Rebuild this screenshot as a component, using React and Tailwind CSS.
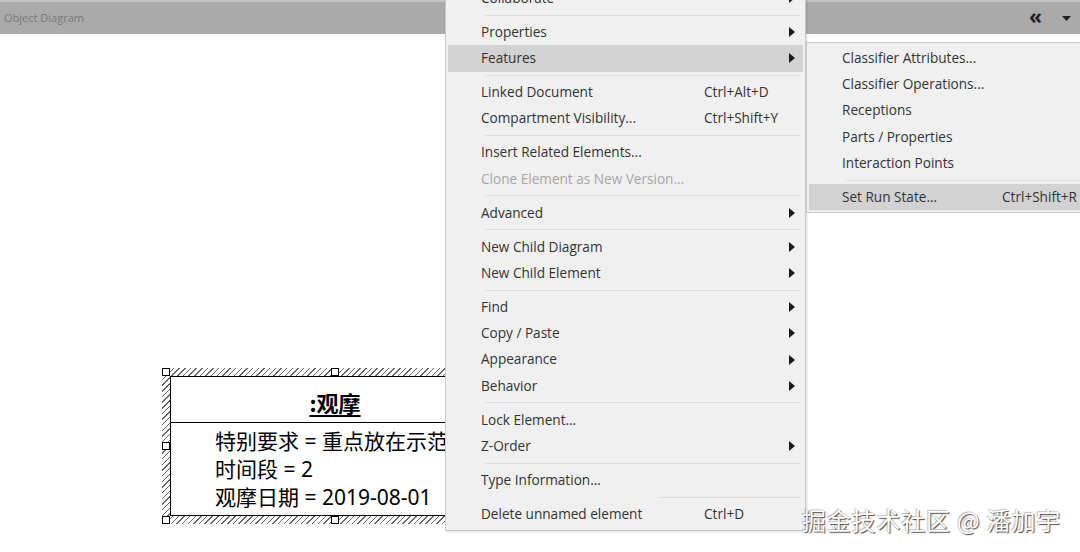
import React from 'react';

const MENU = [
  { label: 'Collaborate', arrow: true },
  'sep',
  { label: 'Properties', arrow: true },
  { label: 'Features', arrow: true, active: true },
  'sep',
  { label: 'Linked Document', shortcut: 'Ctrl+Alt+D' },
  { label: 'Compartment Visibility...', shortcut: 'Ctrl+Shift+Y' },
  'sep',
  { label: 'Insert Related Elements...' },
  { label: 'Clone Element as New Version...', disabled: true },
  'sep',
  { label: 'Advanced', arrow: true },
  'sep',
  { label: 'New Child Diagram', arrow: true },
  { label: 'New Child Element', arrow: true },
  'sep',
  { label: 'Find', arrow: true },
  { label: 'Copy / Paste', arrow: true },
  { label: 'Appearance', arrow: true },
  { label: 'Behavior', arrow: true },
  'sep',
  { label: 'Lock Element...' },
  { label: 'Z-Order', arrow: true },
  'sep',
  { label: 'Type Information...' },
  'sepShort',
  { label: 'Delete unnamed element', shortcut: 'Ctrl+D' },
];

const SUBMENU = [
  { label: 'Classifier Attributes...' },
  { label: 'Classifier Operations...' },
  { label: 'Receptions' },
  { label: 'Parts / Properties' },
  { label: 'Interaction Points' },
  'sep',
  { label: 'Set Run State...', shortcut: 'Ctrl+Shift+R', active: true },
];

function Arrow() {
  return (
    <svg width="6" height="10" viewBox="0 0 6 10" className="block">
      <path d="M0 0 L6 5 L0 10 Z" fill="#1a1a1a" />
    </svg>
  );
}

function MenuRow({ item, labelWidth }) {
  return (
    <div
      className={`mx-[2px] h-[26.25px] flex items-center pl-[33px] pr-[8px] ${
        item.active ? 'bg-[#d2d2d2]' : ''
      } ${item.disabled ? 'text-[#a6a6a6]' : 'text-[#333333]'}`}
    >
      <span className="shrink-0 whitespace-nowrap" style={{ width: labelWidth }}>
        {item.label}
      </span>
      <span className="flex-1 whitespace-nowrap">{item.shortcut}</span>
      {item.arrow && <Arrow />}
    </div>
  );
}

function Separator({ short }) {
  return (
    <div className="h-[7.75px] flex items-center">
      <div className={`h-px bg-[#dedede] flex-1 mr-[5px] ${short ? 'ml-[212px]' : 'ml-[39px]'}`} />
    </div>
  );
}

function Handle({ className }) {
  return <div className={`absolute w-[8px] h-[8px] bg-white border border-black ${className}`} />;
}

export default function App() {
  const menuFont = { fontFamily: '"Open Sans", "Noto Sans", sans-serif' };

  return (
    <div className="relative w-[1080px] h-[552px] overflow-hidden bg-white">
      {/* title bar */}
      <div className="h-[34px] border-t-2 border-[#c4c4c4] bg-[#aaaaaa] flex items-center px-[4px]">
        <span className="text-[11px] text-[#787878]" style={menuFont}>
          Object Diagram
        </span>
        <div className="ml-auto flex items-center gap-[20px] pr-[5px]">
          <span className="text-[21px] font-bold leading-none text-[#222] -mt-[4px]">«</span>
          <svg width="9" height="5" viewBox="0 0 9 5">
            <path d="M0 0 H9 L4.5 5 Z" fill="#222" />
          </svg>
        </div>
      </div>

      {/* diagram element */}
      <div className="absolute left-[162px] top-[368px] w-[346px] h-[156px] bg-[repeating-linear-gradient(135deg,#666_0px,#666_1px,#fff_1px,#fff_4px)] p-[8px]">
        <div
          className="w-full h-full bg-white border border-black flex flex-col"
          style={{ fontFamily: '"Noto Sans", "Noto Sans CJK SC", sans-serif' }}
        >
          <div className="h-[46px] border-b border-black flex items-center justify-center pt-[5px]">
            <span
              className="text-[22px] font-bold underline underline-offset-[3px] text-black"
              style={{ fontFamily: '"Noto Sans CJK SC", sans-serif' }}
            >
              :观摩
            </span>
          </div>
          <div className="pl-[44px] pt-[4px] text-[21px] leading-[28px] text-black whitespace-nowrap">
            <div>特别要求 = 重点放在示范</div>
            <div>时间段 = 2</div>
            <div>观摩日期 = 2019-08-01</div>
          </div>
        </div>
        <Handle className="left-0 top-0" />
        <Handle className="left-[169px] top-0" />
        <Handle className="left-0 top-[74px]" />
        <Handle className="left-0 bottom-0" />
        <Handle className="left-[169px] bottom-0" />
      </div>

      {/* context menu */}
      <div
        className="absolute left-[445px] top-[-19px] w-[361px] bg-[#f0f0f0] border border-[#c9c9c9] py-[3px] text-[13.6px] shadow-[1px_1px_2px_rgba(0,0,0,0.15)]"
        style={menuFont}
      >
        {MENU.map((item, i) =>
          typeof item === 'string' ? (
            <Separator key={i} short={item === 'sepShort'} />
          ) : (
            <MenuRow key={i} item={item} labelWidth={223} />
          )
        )}
      </div>

      {/* submenu */}
      <div
        className="absolute left-[806px] top-[42px] w-[290px] bg-[#f0f0f0] border border-[#c9c9c9] py-[2px] text-[13.6px]"
        style={menuFont}
      >
        {SUBMENU.map((item, i) =>
          typeof item === 'string' ? (
            <Separator key={i} />
          ) : (
            <MenuRow key={i} item={item} labelWidth={160} />
          )
        )}
      </div>

      {/* watermark */}
      <div
        className="absolute left-[802px] top-[502px] text-[24px] tracking-[0.8px] text-white whitespace-nowrap [text-shadow:1px_1px_1px_rgba(0,0,0,0.7),-1px_-1px_1px_rgba(0,0,0,0.25)]"
        style={{ fontFamily: '"Noto Sans CJK SC", sans-serif' }}
      >
        掘金技术社区 @ 潘加宇
      </div>
    </div>
  );
}
